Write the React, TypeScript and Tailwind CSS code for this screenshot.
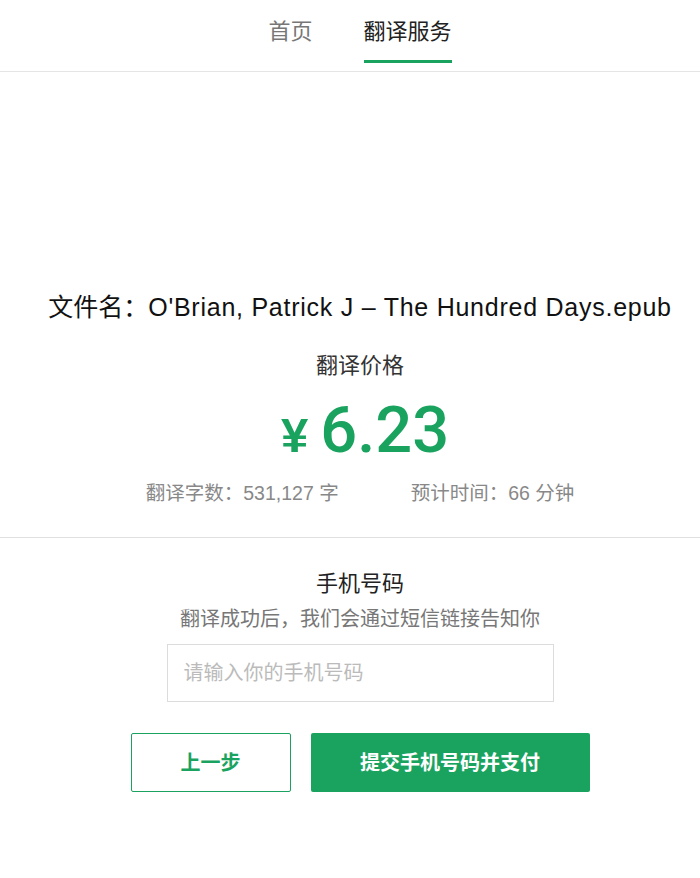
export default function App() {
  const font = { fontFamily: '"Liberation Sans", "Noto Sans CJK SC", sans-serif' };
  return (
    <div style={font} className="w-[700px] min-h-[878px] bg-white text-[#222]">
      {/* Top tabs */}
      <header className="h-[72px] border-b border-[#e5e5e5] pl-[20px] flex justify-center gap-[51px]">
        <div className="pt-[18px] text-[22px] leading-[28px] text-[#777]">首页</div>
        <div className="relative pt-[18px] text-[22px] leading-[28px] text-[#222]">
          翻译服务
          <span className="absolute left-0 right-0 top-[60px] h-[3px] bg-[#1aa35f]" />
        </div>
      </header>

      {/* Order info */}
      <section className="pt-[220px] pb-[31px] pl-[20px] border-b border-[#e0e0e0] flex flex-col items-center">
        <div className="text-[25px] leading-[30px] text-[#111] whitespace-nowrap">
          文件名：<span className="tracking-[0.75px]">O'Brian, Patrick J – The Hundred Days.epub</span>
        </div>
        <div className="mt-[29px] text-[22px] leading-[30px] text-[#333]">翻译价格</div>
        <div className="mt-[14px] h-[70px] flex items-baseline text-[#1aa35f] leading-[70px] pl-[10px]">
          <span className="text-[49px] font-bold mr-[12px]">¥</span>
          <span className="text-[65px] font-medium" style={{ fontFamily: 'Roboto, sans-serif' }}>6.23</span>
        </div>
        <div className="mt-[15px] flex gap-[72px] text-[19.5px] leading-[26px] text-[#888]">
          <span>翻译字数：531,127 字</span>
          <span>预计时间：66 分钟</span>
        </div>
      </section>

      {/* Phone form */}
      <section className="pt-[31px] pl-[20px] flex flex-col items-center">
        <div className="text-[22px] leading-[30px] text-[#222]">手机号码</div>
        <div className="mt-[7px] text-[20px] leading-[26px] text-[#777]">翻译成功后，我们会通过短信链接告知你</div>
        <input
          className="mt-[12px] w-[387px] h-[58px] border border-[#dcdcdc] px-[16px] text-[20px] text-[#333] placeholder:text-[#bbb] outline-none"
          placeholder="请输入你的手机号码"
        />
        <div className="mt-[31px] flex gap-[20px]">
          <button className="w-[160px] h-[59px] border border-[#1aa35f] rounded-[2px] text-[#1aa35f] text-[20px] font-bold">
            上一步
          </button>
          <button className="w-[279px] h-[59px] bg-[#1aa35f] rounded-[2px] text-white text-[20px] font-bold">
            提交手机号码并支付
          </button>
        </div>
      </section>
    </div>
  );
}
